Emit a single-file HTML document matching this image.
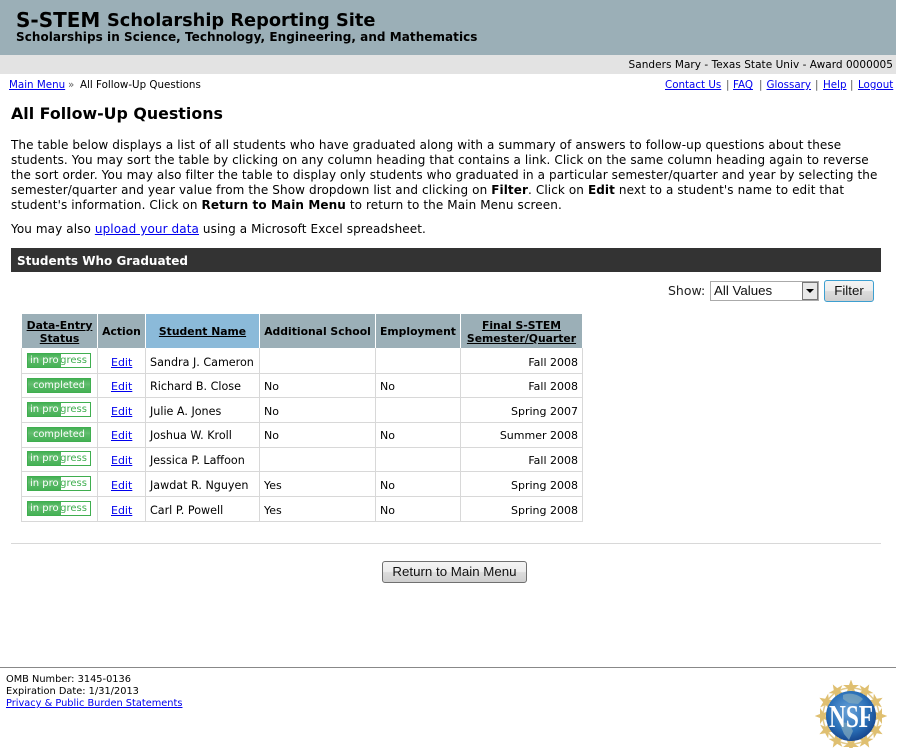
<!DOCTYPE html>
<html><head><meta charset="utf-8"><title>All Follow-Up Questions</title>
<style>
html,body{margin:0;padding:0;background:#fff}
body{width:899px;height:748px;position:relative;overflow:hidden;font-family:"DejaVu Sans","Liberation Sans",sans-serif;font-size:11px;color:#000}
.a{position:absolute;white-space:nowrap;line-height:14px}
a{color:#00e}
.p{font-size:12px;left:11px;letter-spacing:.1px}
.r{position:absolute;background:#d8d8d8}
.h{position:absolute;background:#9bafb7;top:314px;height:34px}
.th{position:absolute;font-weight:bold;font-size:10.8px;line-height:13px;text-align:center;white-space:nowrap}
.th a{color:#000}
.b{position:absolute;left:27px;width:64px;height:15px;box-sizing:border-box;border:1px solid #3fae4f;color:#fff;font-size:10px;line-height:13px;text-align:center;overflow:hidden}
.c{background:linear-gradient(#45b155 0,#66bf72 40%,#58b866 55%,#45b155 100%);font-size:9.7px;letter-spacing:.05px}
.i{background:linear-gradient(#45b155 0,#66bf72 40%,#58b866 55%,#45b155 100%) left/33px 100% no-repeat #fff;text-align:left;padding-left:2px}
.i b{font-weight:normal;color:#3fae4f;margin-left:1.5px}
.e{position:absolute;left:111px;font-size:11px;line-height:14px;margin-top:1px}
.n{position:absolute;left:150px;font-size:11.15px;line-height:14px;white-space:nowrap;margin-top:1px}
.s{position:absolute;left:264px;line-height:14px;margin-top:1px}
.m{position:absolute;left:380px;line-height:14px;margin-top:1px}
.f{position:absolute;right:321px;line-height:14px;white-space:nowrap;margin-top:1px}
.l{font-size:10.3px;top:78px}
.sep{font-size:10.3px;top:78px;color:#555}
.btn{position:absolute;box-sizing:border-box;font-family:"Liberation Sans",sans-serif;font-size:13.3px;text-align:center;background:linear-gradient(#f4f4f4,#ececec 48%,#dcdcdc 52%,#cfcfcf);color:#111}
</style></head><body>
<div style="position:absolute;left:0;top:0;width:896px;height:55px;background:#9bafb7"></div>
<div class="a" style="left:16px;top:9px;font-size:20px;line-height:22px;font-weight:bold">S-STEM</div>
<div class="a" style="left:107px;top:10px;font-size:17.8px;line-height:22px;font-weight:bold">Scholarship Reporting Site</div>
<div class="a" style="left:16px;top:30px;font-size:12px;letter-spacing:.05px;font-weight:bold">Scholarships in Science, Technology, Engineering, and Mathematics</div>
<div style="position:absolute;left:0;top:55px;width:896px;height:19px;background:#e3e3e3"></div>
<div class="a" style="right:6px;top:58px;font-size:10.5px;letter-spacing:.04px">Sanders Mary - Texas State Univ - Award 0000005</div>
<a class="a l" href="#" style="left:9px">Main Menu</a>
<div class="a sep" style="left:68px;color:#666">»</div>
<div class="a l" style="left:80px">All Follow-Up Questions</div>
<a class="a l" href="#" style="left:665px">Contact Us</a><div class="a sep" style="left:726px">|</div>
<a class="a l" href="#" style="left:733px">FAQ</a><div class="a sep" style="left:759px">|</div>
<a class="a l" href="#" style="left:766.5px">Glossary</a><div class="a sep" style="left:815px">|</div>
<a class="a l" href="#" style="left:823px">Help</a><div class="a sep" style="left:850px">|</div>
<a class="a l" href="#" style="left:858px">Logout</a>
<div class="a" style="left:11px;top:104px;font-size:15.85px;line-height:20px;font-weight:bold">All Follow-Up Questions</div>
<div class="a p" style="top:138px">The table below displays a list of all students who have graduated along with a summary of answers to follow-up questions about these</div>
<div class="a p" style="top:153px">students. You may sort the table by clicking on any column heading that contains a link. Click on the same column heading again to reverse</div>
<div class="a p" style="top:168px">the sort order. You may also filter the table to display only students who graduated in a particular semester/quarter and year by selecting the</div>
<div class="a p" style="top:183px">semester/quarter and year value from the Show dropdown list and clicking on <b>Filter</b>. Click on <b>Edit</b> next to a student's name to edit that</div>
<div class="a p" style="top:198px">student's information. Click on <b>Return to Main Menu</b> to return to the Main Menu screen.</div>
<div class="a p" style="top:222px">You may also <a href="#">upload your data</a> using a Microsoft Excel spreadsheet.</div>
<div style="position:absolute;left:11px;top:248px;width:870px;height:24px;background:#333"></div>
<div class="a" style="left:17px;top:254px;color:#fff;font-weight:bold;font-size:12px">Students Who Graduated</div>
<div class="a" style="left:668px;top:284px;font-size:12.5px;color:#222">Show:</div>
<div style="position:absolute;left:710px;top:281px;width:109px;height:20px;box-sizing:border-box;border:1px solid #aaa;background:#fff"></div>
<div class="a" style="left:714px;top:284px;font-family:'Liberation Sans',sans-serif;font-size:13.3px;color:#111">All Values</div>
<div style="position:absolute;left:802px;top:282px;width:16px;height:18px;box-sizing:border-box;border:1px solid #777;background:#e8e8e8"></div>
<div style="position:absolute;left:806px;top:289px;width:0;height:0;border:4px solid transparent;border-top:4px solid #000;border-bottom:0"></div>
<div class="btn" style="left:824px;top:280px;width:50px;height:22px;border:1px solid #3d9fd0;border-radius:3px;line-height:19px">Filter</div>

<div class="h" style="left:22px;width:75px"></div>
<div class="h" style="left:98px;width:47px"></div>
<div class="h" style="left:146px;width:113px;background:#8bbad9"></div>
<div class="h" style="left:260px;width:115px"></div>
<div class="h" style="left:376px;width:84px"></div>
<div class="h" style="left:461px;width:121px"></div>
<div class="th" style="left:22px;width:75px;top:319px"><a href="#">Data-Entry<br>Status</a></div>
<div class="th" style="left:98px;width:47px;top:325px">Action</div>
<div class="th" style="left:146px;width:113px;top:325px"><a href="#">Student Name</a></div>
<div class="th" style="left:260px;width:115px;top:325px">Additional School</div>
<div class="th" style="left:376px;width:84px;top:325px">Employment</div>
<div class="th" style="left:461px;width:121px;top:319px"><a href="#">Final S-STEM<br>Semester/Quarter</a></div>

<div class="r" style="left:21px;top:373px;width:562px;height:1px"></div>
<div class="r" style="left:21px;top:397px;width:562px;height:1px"></div>
<div class="r" style="left:21px;top:422px;width:562px;height:1px"></div>
<div class="r" style="left:21px;top:447px;width:562px;height:1px"></div>
<div class="r" style="left:21px;top:471px;width:562px;height:1px"></div>
<div class="r" style="left:21px;top:496px;width:562px;height:1px"></div>
<div class="r" style="left:21px;top:521px;width:562px;height:1px"></div>
<div class="r" style="left:21px;top:348px;width:1px;height:174px"></div>
<div class="r" style="left:97px;top:348px;width:1px;height:174px"></div>
<div class="r" style="left:145px;top:348px;width:1px;height:174px"></div>
<div class="r" style="left:259px;top:348px;width:1px;height:174px"></div>
<div class="r" style="left:375px;top:348px;width:1px;height:174px"></div>
<div class="r" style="left:460px;top:348px;width:1px;height:174px"></div>
<div class="r" style="left:582px;top:348px;width:1px;height:174px"></div>

<div class="b i" style="top:353px">in pro<b>gress</b></div><a class="e" href="#" style="top:355px">Edit</a><div class="n" style="top:355px">Sandra J. Cameron</div><div class="f" style="top:355px">Fall 2008</div>
<div class="b c" style="top:378px">completed</div><a class="e" href="#" style="top:379px">Edit</a><div class="n" style="top:379px">Richard B. Close</div><div class="s" style="top:379px">No</div><div class="m" style="top:379px">No</div><div class="f" style="top:379px">Fall 2008</div>
<div class="b i" style="top:402px">in pro<b>gress</b></div><a class="e" href="#" style="top:404px">Edit</a><div class="n" style="top:404px">Julie A. Jones</div><div class="s" style="top:404px">No</div><div class="f" style="top:404px">Spring 2007</div>
<div class="b c" style="top:427px">completed</div><a class="e" href="#" style="top:428px">Edit</a><div class="n" style="top:428px">Joshua W. Kroll</div><div class="s" style="top:428px">No</div><div class="m" style="top:428px">No</div><div class="f" style="top:428px">Summer 2008</div>
<div class="b i" style="top:451px">in pro<b>gress</b></div><a class="e" href="#" style="top:453px">Edit</a><div class="n" style="top:453px">Jessica P. Laffoon</div><div class="f" style="top:453px">Fall 2008</div>
<div class="b i" style="top:476px">in pro<b>gress</b></div><a class="e" href="#" style="top:478px">Edit</a><div class="n" style="top:478px">Jawdat R. Nguyen</div><div class="s" style="top:478px">Yes</div><div class="m" style="top:478px">No</div><div class="f" style="top:478px">Spring 2008</div>
<div class="b i" style="top:501px">in pro<b>gress</b></div><a class="e" href="#" style="top:503px">Edit</a><div class="n" style="top:503px">Carl P. Powell</div><div class="s" style="top:503px">Yes</div><div class="m" style="top:503px">No</div><div class="f" style="top:503px">Spring 2008</div>

<div style="position:absolute;left:11px;top:543px;width:870px;height:1px;background:#d8d8d8"></div>
<div class="btn" style="left:382px;top:561px;width:145px;height:22px;border:1px solid #707070;border-radius:3px;line-height:20px">Return to Main Menu</div>

<div style="position:absolute;left:0;top:667px;width:896px;height:1px;background:#888"></div>
<div class="a" style="left:6px;top:674px;font-size:9.8px;line-height:12px">OMB Number: 3145-0136<br>Expiration Date: 1/31/2013<br><a href="#">Privacy &amp; Public Burden Statements</a></div>

<svg style="position:absolute;left:815px;top:680px" width="72" height="68" viewBox="0 0 72 68">
<defs><radialGradient id="g" cx=".45" cy=".4" r=".65"><stop offset="0" stop-color="#6aa2d8"/><stop offset=".6" stop-color="#2a70b8"/><stop offset="1" stop-color="#143f86"/></radialGradient></defs>
<circle cx="36" cy="36" r="28" fill="none" stroke="#e2ca8c" stroke-width="1.5"/>
<g fill="#dfbf70">
<polygon points="36,-0.5 38,5 44,5 39,8.5 41,14 36,10.5 31,14 33,8.5 28,5 34,5"/>
<polygon transform="rotate(30 36 36)" points="36,-0.5 38,5 44,5 39,8.5 41,14 36,10.5 31,14 33,8.5 28,5 34,5"/>
<polygon transform="rotate(60 36 36)" points="36,-0.5 38,5 44,5 39,8.5 41,14 36,10.5 31,14 33,8.5 28,5 34,5"/>
<polygon transform="rotate(90 36 36)" points="36,-0.5 38,5 44,5 39,8.5 41,14 36,10.5 31,14 33,8.5 28,5 34,5"/>
<polygon transform="rotate(120 36 36)" points="36,-0.5 38,5 44,5 39,8.5 41,14 36,10.5 31,14 33,8.5 28,5 34,5"/>
<polygon transform="rotate(150 36 36)" points="36,-0.5 38,5 44,5 39,8.5 41,14 36,10.5 31,14 33,8.5 28,5 34,5"/>
<polygon transform="rotate(180 36 36)" points="36,-0.5 38,5 44,5 39,8.5 41,14 36,10.5 31,14 33,8.5 28,5 34,5"/>
<polygon transform="rotate(210 36 36)" points="36,-0.5 38,5 44,5 39,8.5 41,14 36,10.5 31,14 33,8.5 28,5 34,5"/>
<polygon transform="rotate(240 36 36)" points="36,-0.5 38,5 44,5 39,8.5 41,14 36,10.5 31,14 33,8.5 28,5 34,5"/>
<polygon transform="rotate(270 36 36)" points="36,-0.5 38,5 44,5 39,8.5 41,14 36,10.5 31,14 33,8.5 28,5 34,5"/>
<polygon transform="rotate(300 36 36)" points="36,-0.5 38,5 44,5 39,8.5 41,14 36,10.5 31,14 33,8.5 28,5 34,5"/>
<polygon transform="rotate(330 36 36)" points="36,-0.5 38,5 44,5 39,8.5 41,14 36,10.5 31,14 33,8.5 28,5 34,5"/>
</g>
<circle cx="36" cy="36" r="25" fill="url(#g)"/>
<path d="M28 15c6-3 15-1 20 4l-5 5-9-1-6-4zM24 42l10 1 4 8-4 9-5-6z" fill="#7da7bd" opacity=".75"/>
<text x="36" y="47" text-anchor="middle" font-family="Liberation Serif,serif" font-size="32" font-weight="bold" fill="#fff" textLength="44" lengthAdjust="spacingAndGlyphs">NSF</text>
</svg>
</body></html>
